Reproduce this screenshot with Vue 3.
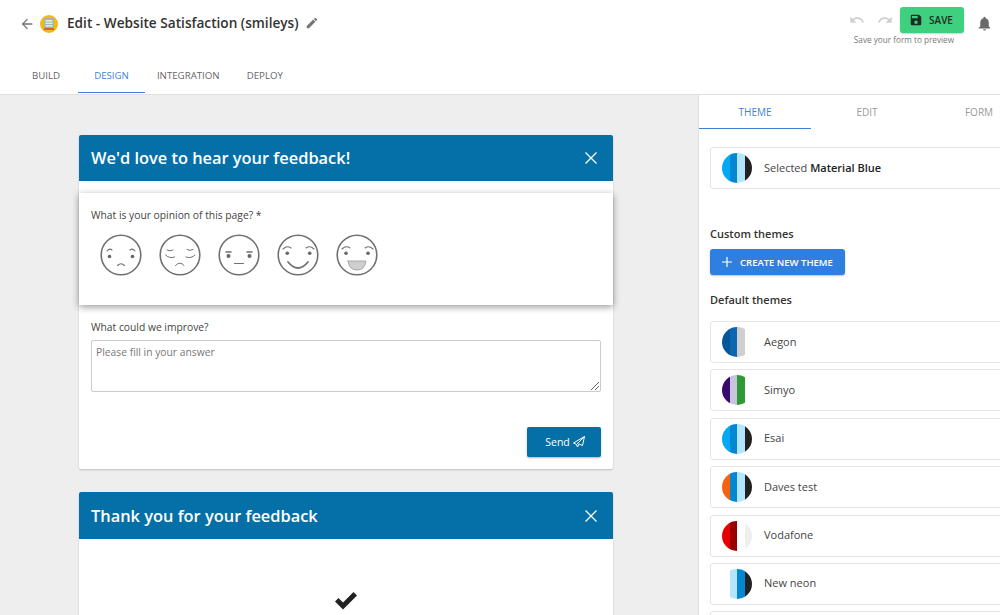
<script setup>
const blue = ['#03a9f4', '#0288d1', '#b3e5fc', '#212121']
const themes = [
  { name: 'Aegon', colors: ['#01579b', '#0d66b0', '#cfcfcf', '#ffffff'] },
  { name: 'Simyo', colors: ['#38096f', '#c7c5dd', '#2e9a35', '#ffffff'] },
  { name: 'Esai', colors: blue },
  { name: 'Daves test', colors: ['#f4640f', '#0288d1', '#b3e5fc', '#212121'] },
  { name: 'Vodafone', colors: ['#e60000', '#990000', '#ffffff', '#eeeeee'] },
  { name: 'New neon', colors: ['#ffffff', '#b3e5fc', '#0288d1', '#212121'] },
  { name: '', colors: ['#ffffff', '#ffffff', '#ffffff', '#ffffff'] }
]
</script>

<template>
  <div class="page">
    <header class="top">
      <div class="title-row">
        <div class="title-left">
          <svg class="back" width="16" height="16" viewBox="0 0 24 24"><path d="M20 11H7.83l5.59-5.59L12 4l-8 8 8 8 1.41-1.41L7.83 13H20z" fill="#757575"/></svg>
          <span class="logo">
            <svg width="10" height="12" viewBox="0 0 10 12"><rect width="10" height="12" rx="1" fill="#9fb4bd"/><rect x="1.5" y="2" width="7" height="1.5" fill="#e6ebdf"/><rect x="1.5" y="4.5" width="7" height="1.5" fill="#e6ebdf"/><rect x="1.5" y="7" width="7" height="1.5" fill="#e6ebdf"/><rect y="10" width="10" height="2" fill="#d9603a"/></svg>
          </span>
          <h1>Edit - Website Satisfaction (smileys)</h1>
          <svg class="pencil" width="14" height="14" viewBox="0 0 24 24"><path d="M3 17.25V21h3.75L17.81 9.94l-3.75-3.75L3 17.25zM20.71 7.04a1 1 0 0 0 0-1.41l-2.34-2.34a1 1 0 0 0-1.41 0l-1.83 1.83 3.75 3.75 1.83-1.83z" fill="#757575"/></svg>
        </div>
        <div class="actions">
          <div class="save-wrap">
            <div class="save-row">
              <svg class="hist" width="16" height="16" viewBox="0 0 24 24"><path d="M12.5 8c-2.65 0-5.05.99-6.9 2.6L2 7v9h9l-3.62-3.62c1.39-1.16 3.16-1.88 5.12-1.88 3.54 0 6.55 2.31 7.6 5.5l2.37-.78C21.08 11.03 17.15 8 12.5 8z" fill="#cfcfcf"/></svg>
              <svg class="hist" width="16" height="16" viewBox="0 0 24 24"><path d="M18.4 10.6C16.55 8.99 14.15 8 11.5 8c-4.65 0-8.58 3.03-9.96 7.22l2.36.78c1.05-3.19 4.05-5.5 7.6-5.5 1.95 0 3.73.72 5.12 1.88L13 16h9V7l-3.6 3.6z" fill="#cfcfcf"/></svg>
              <button class="save">
                <svg width="14" height="14" viewBox="0 0 24 24"><path d="M17 3H5a2 2 0 0 0-2 2v14a2 2 0 0 0 2 2h14a2 2 0 0 0 2-2V7l-4-4zm-5 16a3 3 0 1 1 0-6 3 3 0 0 1 0 6zm3-10H5V5h10v4z" fill="#1d2b24"/></svg>
                SAVE
              </button>
            </div>
            <div class="hint">Save your form to preview</div>
          </div>
          <svg class="bell" width="17" height="17" viewBox="0 0 24 24"><path d="M12 22c1.1 0 2-.9 2-2h-4a2 2 0 0 0 2 2zm6-6v-5c0-3.07-1.63-5.64-4.5-6.32V4a1.5 1.5 0 0 0-3 0v.68C7.64 5.36 6 7.92 6 11v5l-2 2v1h16v-1l-2-2z" fill="#6a6a6a"/></svg>
        </div>
      </div>
      <nav class="tabs">
        <a>BUILD</a>
        <a class="active">DESIGN</a>
        <a>INTEGRATION</a>
        <a>DEPLOY</a>
      </nav>
    </header>

    <div class="body">
      <main class="canvas">
        <section class="card">
          <div class="card-head first">
            <span>We'd love to hear your feedback!</span>
            <svg width="14" height="14" viewBox="0 0 14 14"><path d="M1.5 1.5l11 11M12.5 1.5l-11 11" stroke="#fff" stroke-width="1.3" fill="none"/></svg>
          </div>
          <div class="card-body">
            <div class="focus">
              <label>What is your opinion of this page? *</label>
              <div class="smileys">
                <svg width="42" height="42" viewBox="0 0 42 42" fill="none" stroke="#707070" stroke-width="1.6" stroke-linecap="round">
                  <circle cx="21" cy="21" r="19.800"/>
                  <path d="M7 17q2.500-3 5-1M30 16q2.500-2 5 1M17.500 31.500q3.500-3.500 7 0" stroke-width="1.1"/>
                  <circle cx="9.500" cy="22.500" r="1.800" fill="#666" stroke="none"/><circle cx="32.500" cy="22.500" r="1.800" fill="#666" stroke="none"/>
                </svg>
                <svg width="42" height="42" viewBox="0 0 42 42" fill="none" stroke="#707070" stroke-width="1.6" stroke-linecap="round">
                  <circle cx="21" cy="21" r="19.800"/>
                  <path d="M8 16q3 2 6 0M6.500 21q4 4 9 2M28 15.500q3 2 6 0M27 23q5 2 9-2M16.500 31.500q4.500-5 8.500 0" stroke-width="1"/>
                </svg>
                <svg width="42" height="42" viewBox="0 0 42 42" fill="none" stroke="#707070" stroke-width="1.6" stroke-linecap="round">
                  <circle cx="21" cy="21" r="19.800"/>
                  <path d="M8 18h5M29 18h5" stroke-width="1.500"/>
                  <path d="M16.500 29.500h9" stroke-width="1.100"/>
                  <circle cx="10.500" cy="22" r="2" fill="#666" stroke="none"/><circle cx="31.500" cy="22" r="2" fill="#666" stroke="none"/>
                </svg>
                <svg width="42" height="42" viewBox="0 0 42 42" fill="none" stroke="#707070" stroke-width="1.6" stroke-linecap="round">
                  <circle cx="21" cy="21" r="19.800"/>
                  <path d="M6 15q4-4 8-1M29 14q4-3 8 1" stroke-width="1.100"/>
                  <path d="M11 28q10 12 20 0" stroke-width="1.800"/>
                  <circle cx="10.300" cy="19.300" r="1.800" fill="#666" stroke="none"/><circle cx="32.700" cy="19.300" r="1.800" fill="#666" stroke="none"/>
                </svg>
                <svg width="42" height="42" viewBox="0 0 42 42" fill="none" stroke="#707070" stroke-width="1.6" stroke-linecap="round">
                  <circle cx="21" cy="21" r="19.800"/>
                  <path d="M6 15q4-4 8-1M29 14q4-3 8 1" stroke-width="1.100"/>
                  <path d="M12 27h18q-1 9-9 9t-9-9z" fill="#cfcfcf" stroke="#999" stroke-width="0.800"/>
                  <circle cx="10" cy="19.300" r="1.800" fill="#666" stroke="none"/><circle cx="32" cy="19.300" r="1.800" fill="#666" stroke="none"/>
                </svg>
              </div>
            </div>
            <div class="improve">
              <label>What could we improve?</label>
              <div class="area">
                Please fill in your answer
                <svg class="grip" width="10" height="10" viewBox="0 0 10 10"><path d="M1 9l8-8M5 9l4-4" stroke="#666" stroke-width="1"/></svg>
              </div>
              <div class="send-row">
                <button class="send">
                  Send
                  <svg width="12" height="12" viewBox="0 0 24 24" fill="none" stroke="#fff" stroke-width="2" stroke-linejoin="round"><path d="M23 1L1 14l6 3L23 1l-4 18-7-3-3 6-2-5"/></svg>
                </button>
              </div>
            </div>
          </div>
        </section>

        <section class="card second">
          <div class="card-head">
            <span>Thank you for your feedback</span>
            <svg width="14" height="14" viewBox="0 0 14 14"><path d="M1.5 1.5l11 11M12.5 1.5l-11 11" stroke="#fff" stroke-width="1.3" fill="none"/></svg>
          </div>
          <div class="thanks">
            <svg width="24" height="19" viewBox="0 0 24 19"><path d="M1 10.500l3.500-3.500 4.500 4.500L19.500 1 23 4.500 9 18.500z" fill="#212121"/></svg>
          </div>
        </section>
      </main>

      <aside class="panel">
        <div class="panel-tabs">
          <a class="active">THEME</a>
          <a>EDIT</a>
          <a>FORM</a>
        </div>
        <div class="panel-body">
          <div class="theme-row">
            <span class="swatch"><i v-for="c in blue" :key="c" :style="{ background: c }"></i></span>
            <span class="tname">Selected <b>Material Blue</b></span>
          </div>
          <h3 class="custom">Custom themes</h3>
          <button class="create">
            <svg width="10" height="10" viewBox="0 0 10 10"><path d="M5 0v10M0 5h10" stroke="#fff" stroke-width="1.200"/></svg>
            CREATE NEW THEME
          </button>
          <h3 class="defaults">Default themes</h3>
          <div class="list">
            <div v-for="(t, i) in themes" :key="i" class="theme-row">
              <span class="swatch"><i v-for="(c, j) in t.colors" :key="j" :style="{ background: c }"></i></span>
              <span class="tname">{{ t.name }}</span>
            </div>
          </div>
        </div>
      </aside>
    </div>
  </div>
</template>

<style>
html, body { margin: 0; overflow: hidden; }
</style>

<style scoped>
.page {
  width: 1000px; height: 615px; overflow: hidden; display: flex; flex-direction: column;
  font-family: "Open Sans", "Noto Sans", sans-serif; color: #212121; background: #fff;
}
.top { height: 95px; flex: none; box-sizing: border-box; border-bottom: 1px solid #e0e0e0; display: flex; flex-direction: column; justify-content: space-between; }
.title-row { display: flex; justify-content: space-between; align-items: flex-start; padding: 7px 7px 0 19px; }
.title-left { display: flex; align-items: center; height: 33px; }
.back { margin-right: 5px; }
.logo { width: 18px; height: 18px; border-radius: 50%; background: #f5b90f; display: flex; align-items: center; justify-content: center; margin-right: 9px; }
h1 { margin: 0 0 2px; font-size: 13.650px; font-weight: 600; color: #333; }
.pencil { margin-left: 6px; margin-bottom: 1px; }
.actions { display: flex; align-items: flex-start; }
.save-wrap { display: flex; flex-direction: column; align-items: flex-end; }
.save-row { display: flex; align-items: center; }
.hist { margin-right: 12px; }
.hist:nth-child(2) { margin-right: 7px; }
.save { width: 64px; height: 26px; border: 0; border-radius: 3px; background: #3fd07f; display: flex; align-items: center; justify-content: center; gap: 6px; font: 600 10px "Open Sans", sans-serif; color: #1d2b24; box-shadow: 0 1px 2px rgba(0,0,0,.2); padding: 0 2px 0 0; }
.hint { font-size: 8.200px; color: #777; margin-top: 1px; margin-right: 10px; line-height: 12px; }
.bell { margin: 8px 0 0 12px; }
.tabs { display: flex; height: 36px; padding-left: 32px; }
.tabs a { font-size: 9.700px; font-weight: 500; color: #666; display: flex; align-items: center; box-sizing: border-box; height: 35px; }
.tabs a:nth-child(1) { margin-right: 18px; }
.tabs a.active { color: #3f7fd6; border-bottom: 1px solid #3f7fd6; padding: 0 16px; margin-right: 12px; }
.tabs a:nth-child(3) { margin-right: 27px; }
.body { flex: 1; display: flex; min-height: 0; }
.canvas { width: 698px; flex: none; box-sizing: border-box; background: #eee; padding: 40px 0 0 79px; overflow: hidden; }
.card { width: 534px; background: #fff; border-radius: 2px; box-shadow: 0 1px 2px rgba(0,0,0,.2); }
.second { margin-top: 23px; height: 200px; }
.card-head { background: #0570a7; color: #fff; display: flex; justify-content: space-between; align-items: center; padding: 0 15px 0 12px; height: 46px; font-size: 16.400px; font-weight: 600; border-radius: 2px 2px 0 0; }
.card-head.first { box-sizing: border-box; padding-bottom: 1px; }
.second .card-head { height: 47px; }
.card-body { height: 288px; box-sizing: border-box; padding-top: 12px; }
.focus { height: 112px; box-sizing: border-box; background: #fff; box-shadow: 0 2px 7px rgba(0,0,0,.4); padding: 15px 12px 0; }
label { display: block; font-size: 10.300px; line-height: 15px; color: #444; }
.smileys { display: flex; gap: 17px; margin: 11px 0 0 9px; }
.improve { padding: 15px 12px 0; }
.area { position: relative; height: 52px; box-sizing: border-box; margin-top: 5px; border: 1px solid #ccc; border-radius: 2px; padding: 4px; font-size: 10.300px; line-height: 15px; color: #777; }
.grip { position: absolute; right: 0; bottom: 0; }
.send-row { display: flex; justify-content: flex-end; margin-top: 35px; }
.send { width: 74px; height: 30px; border: 0; border-radius: 2px; background: #0570a7; color: #fff; font: 10.500px "Open Sans", sans-serif; display: flex; align-items: center; justify-content: center; gap: 3px; padding: 0 0 0 2px; box-shadow: 0 1px 2px rgba(0,0,0,.3); }
.thanks { display: flex; justify-content: center; padding-top: 52px; }
.panel { flex: 1; min-width: 0; border-left: 1px solid #e0e0e0; overflow: hidden; background: #fff; }
.panel-tabs { display: flex; width: 336px; height: 34px; }
.panel-tabs a { width: 112px; font-size: 10px; font-weight: 500; color: #9a9a9a; display: flex; align-items: center; justify-content: center; box-sizing: border-box; }
.panel-tabs a.active { color: #3f7fd6; border-bottom: 1px solid #3f7fd6; }
.panel-body { padding: 18px 0 0 11px; width: 330px; }
.theme-row { height: 42px; box-sizing: border-box; border: 1px solid #e6e6e6; border-radius: 3px; display: flex; align-items: center; padding-left: 11px; background: #fff; }
.swatch { width: 30px; height: 30px; border-radius: 50%; overflow: hidden; display: flex; flex: none; }
.swatch i { flex: 1; display: block; }
.tname { margin-left: 12px; font-size: 11px; color: #444; padding-bottom: 2px; }
.tname b { font-weight: 600; color: #222; }
h3 { margin: 0; font-size: 11px; font-weight: 600; line-height: 15px; color: #333; }
.custom { margin-top: 37px; }
.create { margin-top: 8px; width: 135px; height: 26px; border: 0; border-radius: 3px; background: #2f7fe0; color: #fff; font: 600 9.500px "Open Sans", sans-serif; display: flex; align-items: center; justify-content: center; gap: 8px; padding: 0; box-shadow: 0 1px 2px rgba(0,0,0,.25); }
.defaults { margin-top: 17px; }
.list { margin-top: 14px; display: flex; flex-direction: column; gap: 6.400px; }
</style>
